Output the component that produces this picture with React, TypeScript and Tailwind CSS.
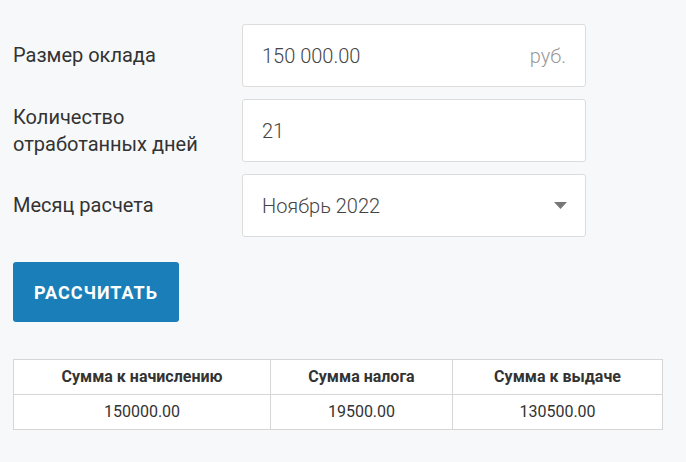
import { useState } from "react";

const rows = [{ accrued: "150000.00", tax: "19500.00", payout: "130500.00" }];

export default function App() {
  const [salary, setSalary] = useState("150 000.00");
  const [days, setDays] = useState("21");
  const [month, setMonth] = useState("Ноябрь 2022");

  return (
    <div className="min-h-[462px] bg-[#f7f8fa] px-[13px] pt-[24px] font-['Roboto',sans-serif] text-[#333]">
      <div className="flex flex-col gap-[12px]">
        <div className="flex items-center">
          <label className="w-[229px] text-[20px] leading-[27px]">Размер оклада</label>
          <div className="flex h-[63px] w-[344px] items-center rounded-[3px] border border-[#dcdcdc] bg-white px-[19px]">
            <input
              value={salary}
              onChange={(e) => setSalary(e.target.value)}
              className="min-w-0 flex-1 bg-transparent text-[20px] font-light text-[#444] outline-none"
            />
            <span className="text-[20px] font-light text-[#999]">руб.</span>
          </div>
        </div>
        <div className="flex items-center">
          <label className="w-[229px] text-[20px] leading-[27px]">Количество отработанных дней</label>
          <div className="flex h-[63px] w-[344px] items-center rounded-[3px] border border-[#dcdcdc] bg-white px-[19px]">
            <input
              value={days}
              onChange={(e) => setDays(e.target.value)}
              className="min-w-0 flex-1 bg-transparent text-[20px] font-light text-[#444] outline-none"
            />
          </div>
        </div>
        <div className="flex items-center">
          <label className="w-[229px] text-[20px] leading-[27px]">Месяц расчета</label>
          <div className="relative h-[63px] w-[344px]">
            <select
              value={month}
              onChange={(e) => setMonth(e.target.value)}
              className="block h-[63px] w-full appearance-none rounded-[3px] border border-[#dcdcdc] bg-white px-[19px] text-[20px] font-light text-[#444] outline-none"
            >
              <option>Октябрь 2022</option>
              <option>Ноябрь 2022</option>
              <option>Декабрь 2022</option>
            </select>
            <svg
              className="pointer-events-none absolute right-[19px] top-[28px]"
              width="13"
              height="7"
              viewBox="0 0 13 7"
            >
              <path d="M0 0h13L6.5 7z" fill="#777" />
            </svg>
          </div>
        </div>
      </div>

      <button className="mt-[25px] h-[60px] w-[166px] rounded-[3px] bg-[#1a7fb8] text-[18px] font-bold tracking-[1px] text-white">
        РАССЧИТАТЬ
      </button>

      <table className="mt-[37px] w-[650px] border-collapse bg-white text-[16px]">
        <thead>
          <tr>
            <th className="h-[35px] w-[257px] border border-[#d6d6d6] font-bold">Сумма к начислению</th>
            <th className="h-[35px] w-[182px] border border-[#d6d6d6] font-bold">Сумма налога</th>
            <th className="h-[35px] border border-[#d6d6d6] font-bold">Сумма к выдаче</th>
          </tr>
        </thead>
        <tbody>
          {rows.map((r) => (
            <tr key={r.accrued}>
              <td className="h-[35px] border border-[#d6d6d6] text-center">{r.accrued}</td>
              <td className="h-[35px] border border-[#d6d6d6] text-center">{r.tax}</td>
              <td className="h-[35px] border border-[#d6d6d6] text-center">{r.payout}</td>
            </tr>
          ))}
        </tbody>
      </table>
    </div>
  );
}
